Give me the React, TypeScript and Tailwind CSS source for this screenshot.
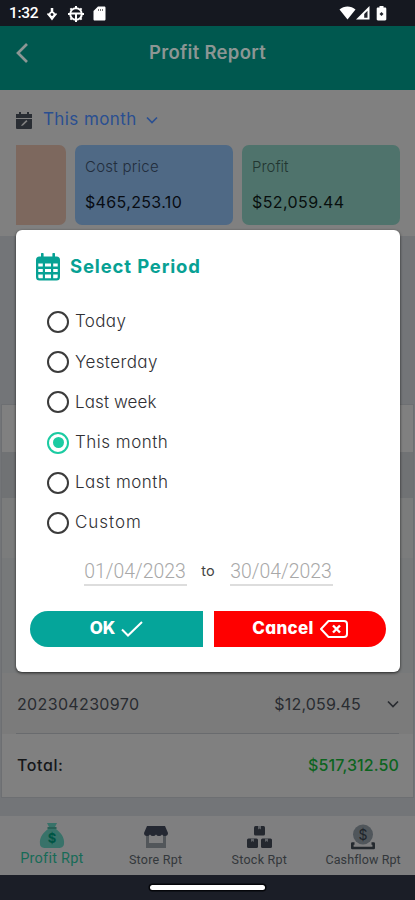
import React from "react";

const periods = [
  { name: "Today", cls: "tracking-[0.35px]" },
  { name: "Yesterday", cls: "tracking-[0.4px]" },
  { name: "Last week", cls: "tracking-[0.1px]" },
  { name: "This month", cls: "tracking-[0.5px]" },
  { name: "Last month", cls: "tracking-[0.5px]" },
  { name: "Custom", cls: "tracking-[0.95px]" },
];

function StatusBar() {
  return (
    <div className="flex h-[26px] shrink-0 items-center bg-[#151820] pl-[9px] text-white">
      <span className="w-[29px] whitespace-nowrap pt-[2px] font-['Roboto',sans-serif] text-[15.5px] font-medium leading-none tracking-[-0.3px]">1:32</span>
      <svg className="ml-[8px] mt-[1px]" width="12" height="14" viewBox="0 0 12 14" fill="none" stroke="currentColor">
        <path d="M6 1v4" strokeWidth="2.500" />
        <circle cx="6" cy="7.500" r="2.300" strokeWidth="1.600" />
        <path d="m1.500 6.500 3 3.500L6 12l1.500-2 3-3.500" strokeWidth="1.800" />
      </svg>
      <svg className="ml-[10px] mt-[1px]" width="16" height="16" viewBox="0 0 16 16" fill="none" stroke="currentColor">
        <circle cx="8" cy="8" r="5.800" strokeWidth="2" />
        <path d="M2 7.400h12M8 8v6M8 0v2M8 14v2M0 8h2M14 8h2M2.400 2.400l1.400 1.400M13.600 2.400l-1.400 1.400M2.400 13.600l1.400-1.400M13.600 13.600l-1.400-1.400" strokeWidth="2" />
      </svg>
      <svg className="ml-[9px]" width="13" height="15" viewBox="0 0 13 15">
        <path d="M5 .5h6.200c.8 0 1.300.5 1.300 1.300v11.400c0 .8-.5 1.300-1.300 1.300H1.800c-.8 0-1.300-.5-1.300-1.300V5Z" fill="white" />
        <path d="M5.500 3v2M7.500 3v2M9.500 3v2" stroke="#777" />
      </svg>
      <svg className="ml-auto" width="17" height="14" viewBox="0 0 17 14"><path d="M.5 3.400C5-.6 12-.6 16.500 3.400L8.500 13.500Z" fill="white" /></svg>
      <svg width="14" height="14" viewBox="0 0 14 14"><path d="M0 13.500 13.500 0v13.500Z" fill="white" /><path d="M8.200 8 11.500 4.700v7H8.200Z" fill="#22252d" /></svg>
      <svg className="ml-[6px] mr-[28px]" width="11" height="15" viewBox="0 0 11 15"><path d="M3.500 0h4v1.500h1.600c.7 0 1.200.5 1.200 1.200v10.600c0 .7-.5 1.200-1.200 1.200H1.900c-.7 0-1.200-.5-1.200-1.200V2.700c0-.7.500-1.200 1.200-1.200h1.600Z" fill="white" /><path d="m5.500 6 2 2-2 2-2-2Z" fill="#22252d" /></svg>
    </div>
  );
}

function Chevron({ className }: { className?: string }) {
  return (
    <svg className={className} width="12" height="8" viewBox="0 0 12 8" fill="none" stroke="currentColor" strokeWidth="1.700">
      <path d="m1 1.500 5 5 5-5" />
    </svg>
  );
}

function NavItem({ label, cls, children }: { label: string; cls: string; children: React.ReactNode }) {
  return (
    <div className="flex flex-1 flex-col items-center pt-[6px]">
      <svg width="28" height="28" viewBox="0 0 28 28">{children}</svg>
      <span className={`${cls} whitespace-nowrap font-['Roboto',sans-serif]`}>{label}</span>
    </div>
  );
}

function Box({ x, y }: { x: number; y: number }) {
  return (
    <g>
      <rect x={x} y={y} width="11" height="9.500" rx="1.500" fill="#24282f" />
      <path d={`M${x + 4} ${y}v3.500l1.500-1 1.500 1V${y}`} fill="#5d6065" />
    </g>
  );
}

function Dialog() {
  return (
    <div className="absolute left-[16px] top-[230px] flex h-[442px] w-[384px] flex-col rounded-[6px] bg-white shadow-[0_1px_3px_rgba(0,0,0,0.7)]">
      <div className="flex h-[72px] shrink-0 items-center pl-[19px] pt-[1px] text-[#07a194]">
        <svg width="26" height="28" viewBox="0 0 26 28">
          <path fill="currentColor" fillRule="evenodd" d="M6 1a1.300 1.300 0 0 1 2.600 0v2.500h8.800V1A1.300 1.300 0 0 1 20 1v2.500h1.500A3.500 3.500 0 0 1 25 7v17a3.500 3.500 0 0 1-3.500 3.500h-17A3.500 3.500 0 0 1 1 24V7a3.500 3.500 0 0 1 3.500-3.500H6ZM3.300 10.500v3h4.500v-3Zm6.700 0v3h6v-3Zm8.200 0v3h4.500v-3ZM3.300 16v3h4.500v-3Zm6.700 0v3h6v-3Zm8.200 0v3h4.500v-3ZM3.300 21.500V24c0 .8.5 1.300 1.300 1.300h3.200v-3.800Zm6.700 0v3.800h6v-3.800Zm8.200 0v3.800h3.200c.8 0 1.300-.5 1.300-1.300v-2.500Z" />
        </svg>
        <h2 className="ml-[9px] whitespace-nowrap text-[18.500px] font-bold tracking-[0.85px]">Select Period</h2>
      </div>
      <div className="flex flex-col pl-[31px]">
        {periods.map((p) => {
          const on = p.name === "This month";
          return (
            <div key={p.name} className="flex h-[40.200px] items-center">
              <span className={`flex size-[22px] shrink-0 items-center justify-center rounded-full border-2 ${on ? "border-[#1bcba2]" : "border-[#3b3b3b]"}`}>
                {on && <span className="size-[11px] rounded-full bg-[#1bcba2]" />}
              </span>
              <span className={`ml-[6px] whitespace-nowrap text-[17px] font-light text-[#303034] ${p.cls}`}>{p.name}</span>
            </div>
          );
        })}
      </div>
      <div className="mt-[13px] flex h-[30px] items-center justify-center font-['Roboto',sans-serif] text-[19.400px] font-light text-[#a8a8a8]">
        <span className="flex h-[30px] w-[103px] items-center justify-center border-b-2 border-[#dddddd] pt-[3px]">01/04/2023</span>
        <span className="w-[43px] text-center font-['Inter',sans-serif] text-[14.500px] font-normal text-[#444]">to</span>
        <span className="flex h-[30px] w-[103px] items-center justify-center border-b-2 border-[#dddddd] pt-[3px]">30/04/2023</span>
      </div>
      <div className="mt-[25px] flex h-[36px] gap-[11px] pl-[14px] text-[17px] font-extrabold text-white">
        <button className="flex w-[173px] items-center justify-center rounded-l-full bg-[#05a59a]">
          <span>OK</span>
          <svg className="ml-[6px]" width="22" height="18" viewBox="0 0 22 18" fill="none" stroke="white" strokeWidth="2"><path d="m1 9.500 6 6L21 2" /></svg>
        </button>
        <button className="flex w-[172px] items-center justify-center rounded-r-full bg-[#ff0000]">
          <span className="tracking-[0.35px]">Cancel</span>
          <svg className="ml-[6px]" width="28" height="20" viewBox="0 0 28 20" fill="none" stroke="white" strokeWidth="2" strokeLinejoin="round"><path d="M8.500 2H24q3 0 3 3v10q0 3-3 3H8.500L1 10Z" /><path d="m13 6.500 7 7m0-7-7 7" strokeWidth="2.400" /></svg>
        </button>
      </div>
    </div>
  );
}

export default function App() {
  return (
    <div className="relative flex h-[900px] w-[415px] flex-col overflow-hidden bg-[#737578] font-['Inter',sans-serif] [font-feature-settings:'cv11']">
      <StatusBar />
      <header className="flex h-[64px] shrink-0 items-center bg-[#00584f] pb-[10px] text-[#8c9694]">
        <svg className="ml-[16px]" width="12" height="20" viewBox="0 0 12 20" fill="none" stroke="currentColor" strokeWidth="2.700"><path d="M11 1 2 10l9 9" /></svg>
        <h1 className="mr-[28px] flex-1 text-center text-[18.500px] font-semibold tracking-[0.300px]">Profit Report</h1>
      </header>
      <section className="h-[146px] shrink-0 bg-[#808080]">
        <div className="flex h-[55px] items-center pl-[16px] pt-[5px] text-[#2a4f91]">
          <svg width="16" height="17" viewBox="0 0 16 17"><path fill="#292d33" fillRule="evenodd" d="M3 0h2v2h6V0h2v2h3v4H0V2h3ZM0 7h16v9q0 1-1 1H1q-1 0-1-1Zm5 7 2-.5 4.500-4.300-1.200-1.200L6 12.200Z" /></svg>
          <span className="ml-[11px] whitespace-nowrap text-[17px] tracking-[0.400px]">This month</span>
          <Chevron className="ml-[9px]" />
        </div>
        <div className="flex h-[80px] pl-[16px]">
          <div className="w-[50px] rounded-r-[7px] bg-[#7d685e]" />
          <div className="ml-[9px] w-[158px] rounded-[7px] bg-[#4f6985] px-[10px] pt-[11px]">
            <p className="text-[15px] font-light leading-[22px] tracking-[0.250px] text-[#222d3c]">Cost price</p>
            <p className="mt-[13px] text-[16px] leading-[22px] tracking-[0.350px] text-[#080c13]">$465,253.10</p>
          </div>
          <div className="ml-[9px] w-[158px] rounded-[7px] bg-[#4f736c] px-[10px] pt-[11px]">
            <p className="text-[15px] font-light leading-[22px] text-[#223631]">Profit</p>
            <p className="mt-[13px] text-[16px] leading-[22px] tracking-[0.400px] text-[#080f0e]">$52,059.44</p>
          </div>
        </div>
      </section>
      <section className="mx-px mt-[168px] flex h-[394px] shrink-0 flex-col border border-[#6d6f72] bg-[#7b7b7b]">
        <div className="h-[47px] bg-[#808080]" />
        <div className="h-[46px] bg-[#707274]" />
        <div className="h-[60px] bg-[#7b7c7c]" />
        <div className="h-[115px] bg-[#77797a]" />
        <div className="mx-[14px] flex h-[61px] items-center border-b border-[#696b6e] pt-[2px] text-[16px] text-[#292c31]">
          <span className="ml-px whitespace-nowrap tracking-[0.350px]">202304230970</span>
          <span className="ml-auto tracking-[0.200px]">$12,059.45</span>
          <Chevron className="ml-[26px]" />
        </div>
        <div className="flex flex-1 items-center bg-[#808080] px-[14px] pb-[2px] text-[16px] font-medium">
          <span className="ml-px tracking-[0.600px] text-[#151719]">Total:</span>
          <span className="ml-auto tracking-[0.100px] text-[#0c641e]">$517,312.50</span>
        </div>
      </section>
      <nav className="mt-[18px] flex h-[59px] shrink-0 bg-[#7f7f80] text-[#33373b]">
        <NavItem label="Profit Rpt" cls="text-[14.500px] tracking-[0.250px] leading-[18px] text-[#176b57]">
          <path d="M9 1h10l-2 4H11ZM10 7h8c4 3 9 8 8 15-.4 3-3 4-5 4H7c-2 0-5-1-5-4C1 15 6 10 10 7Z" fill="#387269" />
          <path d="M9.500 6h9" stroke="#0c5547" strokeWidth="1.500" />
          <text x="14" y="21" textAnchor="middle" fontSize="13" fontWeight="bold" fill="#005544">$</text>
        </NavItem>
        <NavItem label="Store Rpt" cls="text-[12.500px] tracking-[0.250px] leading-[20px]">
          <path d="M4 13h20v13H4Zm3 0v8h14v-8Z" fill="#52565a" fillRule="evenodd" />
          <path d="M5 4h18l3 7q0 3-3 3-2 0-3-1.500-1 1.500-3 1.500t-3-1.500q-1 1.500-3 1.500t-3-1.500Q7 14 5 14q-3 0-3-3Z" fill="#242832" />
        </NavItem>
        <NavItem label="Stock Rpt" cls="text-[12.500px] tracking-[0.250px] leading-[20px]">
          <Box x={9} y={4} /><Box x={2} y={16.500} /><Box x={16} y={16.500} />
        </NavItem>
        <NavItem label="Cashflow Rpt" cls="text-[12.500px] tracking-[0.100px] leading-[20px]">
          <circle cx="14" cy="12.500" r="10" fill="#50565b" />
          <text x="14" y="17.500" textAnchor="middle" fontSize="14" fill="#1e242a">$</text>
          <path d="M5.500 21.500H3.300v4.500h21.400v-4.500h-2.200" fill="none" stroke="#24292e" strokeWidth="2.600" strokeLinejoin="round" />
        </NavItem>
      </nav>
      <footer className="flex h-[25px] shrink-0 items-center justify-center bg-[#1b1e27]">
        <div className="h-[5px] w-[115px] rounded-full bg-white shadow-[0_0_0_1.500px_#05060a]" />
      </footer>
      <Dialog />
    </div>
  );
}
